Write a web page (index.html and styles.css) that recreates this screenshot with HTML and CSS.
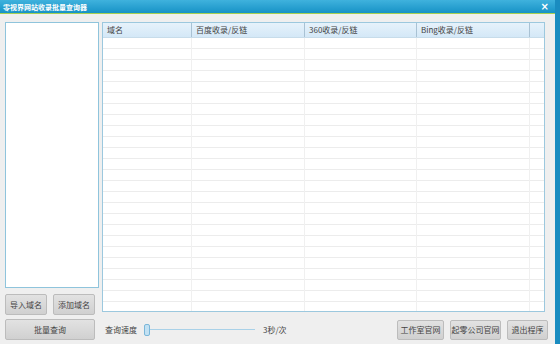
FILE: index.html
```html
<!DOCTYPE html>
<html lang="zh-CN">
<head>
  <meta charset="UTF-8" />
  <title>零视界网站收录批量查询器</title>
  <link rel="stylesheet" href="styles.css">
</head>
<body>
  <div class="window">
    <div class="titlebar">
      <span class="title">零视界网站收录批量查询器</span>
      <span class="close">×</span>
    </div>

    <div class="main">
      <div class="left">
        <div class="domain-list"></div>
        <div class="btn-row">
          <button class="btn">导入域名</button>
          <button class="btn">添加域名</button>
        </div>
        <button class="btn btn-wide">批量查询</button>
      </div>

      <div class="right">
        <div class="grid">
          <div class="grid-head">
            <div class="cell c1">域名</div>
            <div class="cell c2">百度收录/反链</div>
            <div class="cell c3">360收录/反链</div>
            <div class="cell c4">Bing收录/反链</div>
            <div class="cell c5"></div>
          </div>
          <div class="grid-body"></div>
        </div>

        <div class="footer">
          <span class="label">查询速度</span>
          <div class="slider"><span class="thumb"></span></div>
          <span class="label speed">3秒/次</span>
          <div class="links">
            <button class="btn site">工作室官网</button>
            <button class="btn company">起零公司官网</button>
            <button class="btn quit">退出程序</button>
          </div>
        </div>
      </div>
    </div>
  </div>
</body>
</html>
```

FILE: styles.css
```css
body {
  margin: 0;
  font-family: "Noto Sans CJK SC", "Noto Sans", sans-serif;
  font-size: 8px;
  color: #444;
  background: #efefef;
}

.window {
  width: 560px;
  height: 344px;
  box-sizing: border-box;
  border-right: 5px solid #1a8cc0;
  background: #efefef;
  display: flex;
  flex-direction: column;
}

.titlebar {
  height: 13px;
  flex: none;
  background: linear-gradient(#3fb2dd, #1792c6);
  border-bottom: 1px solid #a6cf52;
  display: flex;
  align-items: center;
  justify-content: space-between;
  padding: 0 4px 0 3px;
  color: #fff;
}

.title {
  font-weight: bold;
  font-size: 7px;
}

.close {
  font-family: "DejaVu Sans", sans-serif;
  font-size: 10px;
  font-weight: bold;
  line-height: 13px;
  padding: 0 2px;
}

.main {
  flex: 1;
  display: flex;
  padding: 8px 10px 4px 5px;
  gap: 3px;
}

/* left side */
.left {
  width: 94px;
  display: flex;
  flex-direction: column;
  gap: 4px;
}

.domain-list {
  flex: 1;
  background: #fff;
  border: 1px solid #8fc4dc;
  margin-bottom: 2px;
}

.btn-row {
  width: 90px;
  display: flex;
  justify-content: space-between;
}

.btn {
  font-family: inherit;
  font-size: 8px;
  color: #444;
  height: 21px;
  padding: 0;
  background: linear-gradient(#e2e2e2, #d0d0d0);
  border: 1px solid #bcbcbc;
  border-radius: 2px;
  cursor: pointer;
}

.btn-row .btn {
  width: 42px;
}

.btn-wide {
  width: 90px;
}

/* right side */
.right {
  flex: 1;
  display: flex;
  flex-direction: column;
}

.grid {
  height: 288px;
  background: #fff;
  border: 1px solid #9cc8de;
  display: flex;
  flex-direction: column;
}

.grid-head {
  display: flex;
  height: 14px;
  background: linear-gradient(#e6f2fb, #d4e8f7);
  border-bottom: 1px solid #c7dcea;
}

.cell {
  box-sizing: border-box;
  padding-left: 4px;
  line-height: 14px;
  border-right: 1px solid #a9c2d4;
}

.c1 { width: 89px; }
.c2 { width: 113px; }
.c3 { width: 112px; }
.c4 { width: 113px; }
.c5 { flex: 1; border-right: none; }

.grid-body {
  flex: 1;
  background:
    linear-gradient(90deg,
      transparent 88px, #f0f0f0 88px, #f0f0f0 89px,
      transparent 89px, transparent 201px, #f0f0f0 201px, #f0f0f0 202px,
      transparent 202px, transparent 313px, #f0f0f0 313px, #f0f0f0 314px,
      transparent 314px, transparent 426px, #f0f0f0 426px, #f0f0f0 427px,
      transparent 427px),
    repeating-linear-gradient(transparent 0, transparent 10px, #ececec 10px, #ececec 11px);
}

.footer {
  flex: 1;
  display: flex;
  align-items: center;
  padding-left: 3px;
  padding-top: 7px;
}

.slider {
  position: relative;
  width: 110px;
  height: 1px;
  margin: 0 8px;
  background: #a9d1e8;
}

.thumb {
  position: absolute;
  left: -1px;
  top: -5px;
  width: 4px;
  height: 10px;
  border: 1px solid #7bb7d9;
  border-radius: 2px;
  background: #c2e1f3;
}

.links {
  margin-left: auto;
  margin-right: -3px;
  display: flex;
  gap: 6px;
}

.links .btn {
  height: 20px;
}

.site { width: 47px; }
.company { width: 51px; }
.quit { width: 41px; }
```
